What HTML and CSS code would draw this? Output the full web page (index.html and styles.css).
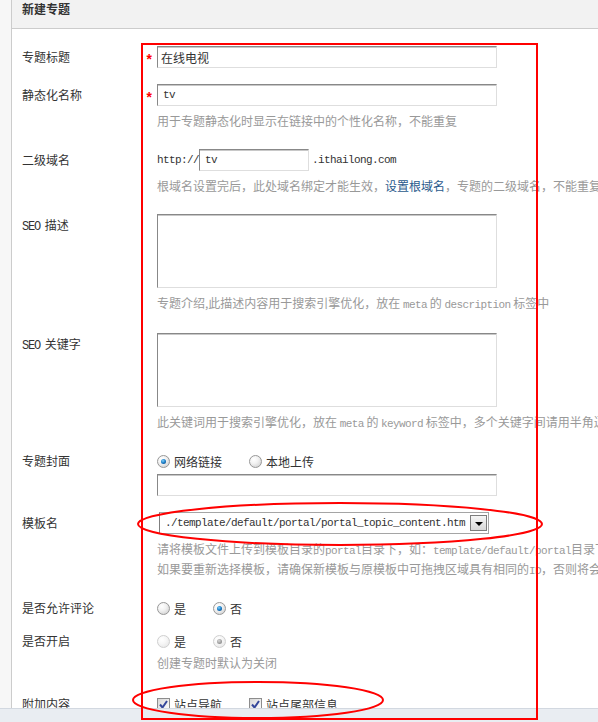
FILE: index.html
```html
<!DOCTYPE html>
<html lang="zh-CN">

<head>
    <meta charset="UTF-8">
    <meta name="viewport" content="width=device-width, initial-scale=1.0">
    <title>新建专题</title>
    <link rel="stylesheet" href="styles.css">
</head>

<body>
    <div class="page">
        <div class="side"></div>
        <div class="main">
            <h3 class="head">新建专题</h3>
            <div class="form">
                <!-- 专题标题 -->
                <div class="row">
                    <div class="label">专题标题</div>
                    <div class="req">*</div>
                    <div class="field"><input class="txt" type="text" value="在线电视"></div>
                </div>
                <!-- 静态化名称 -->
                <div class="row">
                    <div class="label">静态化名称</div>
                    <div class="req">*</div>
                    <div class="field">
                        <input class="txt en-txt" type="text" value="tv">
                        <p class="tips">用于专题静态化时显示在链接中的个性化名称，不能重复</p>
                    </div>
                </div>
                <!-- 二级域名 -->
                <div class="row">
                    <div class="label">二级域名</div>
                    <div class="req"></div>
                    <div class="field">
                        <div class="domain">
                            <span class="en">http://</span>
                            <input class="txt en-txt short" type="text" value="tv">
                            <span class="en">.ithailong.com</span>
                        </div>
                        <p class="tips">根域名设置完后，此处域名绑定才能生效，<a href="javascript:;">设置根域名</a>，专题的二级域名，不能重复</p>
                    </div>
                </div>
                <!-- SEO 描述 -->
                <div class="row">
                    <div class="label"><span class="en">SEO</span> 描述</div>
                    <div class="req"></div>
                    <div class="field">
                        <textarea class="area"></textarea>
                        <p class="tips">专题介绍,此描述内容用于搜索引擎优化，放在 <span class="en">meta</span> 的 <span class="en">description</span> 标签中</p>
                    </div>
                </div>
                <!-- SEO 关键字 -->
                <div class="row">
                    <div class="label"><span class="en">SEO</span> 关键字</div>
                    <div class="req"></div>
                    <div class="field">
                        <textarea class="area"></textarea>
                        <p class="tips">此关键词用于搜索引擎优化，放在 <span class="en">meta</span> 的 <span class="en">keyword</span> 标签中，多个关键字间请用半角逗号隔开</p>
                    </div>
                </div>
                <!-- 专题封面 -->
                <div class="row">
                    <div class="label label-s">专题封面</div>
                    <div class="req"></div>
                    <div class="field">
                        <div class="opts">
                            <span class="opt"><i class="radio on"></i>网络链接</span>
                            <span class="opt"><i class="radio"></i>本地上传</span>
                        </div>
                        <input class="txt cover" type="text" value="">
                    </div>
                </div>
                <!-- 模板名 -->
                <div class="row">
                    <div class="label">模板名</div>
                    <div class="req"></div>
                    <div class="field">
                        <div class="select">
                            <span class="en">./template/default/portal/portal_topic_content.htm</span>
                            <span class="arrow"></span>
                        </div>
                        <div class="tips">
                            <p>请将模板文件上传到模板目录的<span class="en">portal</span>目录下，如：<span class="en">template/default/portal</span>目录下</p>
                            <p>如果要重新选择模板，请确保新模板与原模板中可拖拽区域具有相同的<span class="en">ID</span>，否则将会导致数据丢失</p>
                        </div>
                    </div>
                </div>
                <!-- 是否允许评论 -->
                <div class="row row-opt">
                    <div class="label label-s">是否允许评论</div>
                    <div class="req"></div>
                    <div class="field">
                        <div class="opts">
                            <span class="opt"><i class="radio"></i>是</span>
                            <span class="opt"><i class="radio on"></i>否</span>
                        </div>
                    </div>
                </div>
                <!-- 是否开启 -->
                <div class="row row-opt">
                    <div class="label label-s">是否开启</div>
                    <div class="req"></div>
                    <div class="field">
                        <div class="opts">
                            <span class="opt"><i class="radio dis"></i>是</span>
                            <span class="opt"><i class="radio dis on"></i>否</span>
                        </div>
                        <p class="tips tips-near">创建专题时默认为关闭</p>
                    </div>
                </div>
                <!-- 附加内容 -->
                <div class="row row-opt row-last">
                    <div class="label label-s">附加内容</div>
                    <div class="req"></div>
                    <div class="field">
                        <div class="opts">
                            <span class="opt"><i class="check"><svg width="9" height="9" viewBox="0 0 9 9"><polyline points="1,4.5 3.5,7.5 8,1" fill="none" stroke="#34479a" stroke-width="2"/></svg></i>站点导航</span>
                            <span class="opt"><i class="check"><svg width="9" height="9" viewBox="0 0 9 9"><polyline points="1,4.5 3.5,7.5 8,1" fill="none" stroke="#34479a" stroke-width="2"/></svg></i>站点尾部信息</span>
                        </div>
                    </div>
                </div>
            </div>
        </div>
    </div>

    <div class="foot"></div>

    <!-- 红色标注 -->
    <svg class="mark" width="598" height="722" viewBox="0 0 598 722">
        <rect x="142" y="44" width="395" height="675" fill="none" stroke="#f00" stroke-width="2" shape-rendering="crispEdges"/>
        <ellipse cx="340" cy="524" rx="202" ry="21" fill="none" stroke="#f00" stroke-width="2"/>
        <ellipse cx="258" cy="700" rx="125" ry="18" fill="none" stroke="#f00" stroke-width="2"/>
    </svg>
</body>

</html>
```

FILE: styles.css
```css
* {
    padding: 0;
    margin: 0;
}

body {
    font: 12px "Noto Sans CJK SC", "Liberation Sans", sans-serif;
    color: #333;
    background: #fff;
}

.page {
    display: flex;
    height: 100vh;
    overflow: hidden;
}

.side {
    width: 11px;
    flex: none;
    background: #f7f7f7;
    border-right: 1px solid #ccc;
}

.main {
    flex: 1;
    min-width: 0;
    overflow: hidden;
}

.head {
    height: 28px;
    line-height: 18px;
    padding-left: 10px;
    background: #f2f2f2;
    border-bottom: 1px solid #ccc;
    font-size: 12px;
    font-weight: bold;
    color: #333;
}

.form {
    padding: 9px 0 0 10px;
}

.row {
    display: grid;
    grid-template-columns: 121px 14px minmax(0, 1fr);
    padding: 8px 0;
}

.row-opt {
    padding: 8px 0 7px;
}

.row-last {
    padding-top: 13px;
}

.label {
    line-height: 22px;
    white-space: nowrap;
}

.label-s {
    line-height: 18px;
}

.req {
    height: 0;
    overflow: visible;
    color: #f00;
    font: bold 14px/30px "Liberation Mono", monospace;
    padding-left: 2px;
}

.field {
    min-width: 0;
}

.en {
    font-family: "Liberation Mono", monospace;
    font-size: 11px;
    letter-spacing: -0.6px;
}

.label .en {
    font-size: 12px;
    letter-spacing: -1.2px;
    margin-right: 2px;
}

.txt {
    display: block;
    width: 340px;
    height: 22px;
    box-sizing: border-box;
    border: 1px solid;
    border-color: #888 #dedede #dedede #888;
    box-shadow: inset 0 1px 0 #c8c8c8;
    padding: 0 3px;
    font: 12px "Noto Sans CJK SC", sans-serif;
    color: #333;
    background: #fff;
    outline: none;
}

.en-txt {
    font: 11px "Liberation Mono", monospace;
    letter-spacing: -0.6px;
    padding-left: 5px;
}

.short {
    width: 110px;
    margin-right: 3px;
}

.domain {
    display: flex;
    align-items: center;
}

.cover {
    margin-top: 4px;
}

.area {
    display: block;
    width: 340px;
    height: 74px;
    margin-bottom: 3px;
    box-sizing: border-box;
    border: 1px solid;
    border-color: #888 #dedede #dedede #888;
    box-shadow: inset 0 1px 0 #c8c8c8;
    resize: none;
    outline: none;
    background: #fff;
}

.tips {
    color: #999;
    line-height: 18px;
    margin: 6px 0 3px;
    white-space: nowrap;
}

.tips-near {
    margin-top: 4px;
}

.tips a {
    color: #2a5a8c;
    text-decoration: none;
}

/* 单选 复选 */
.opts {
    display: flex;
    align-items: center;
    height: 18px;
}

.opt {
    display: flex;
    align-items: center;
    gap: 4px;
    margin-right: 27px;
}

.radio {
    display: flex;
    align-items: center;
    justify-content: center;
    width: 13px;
    height: 13px;
    box-sizing: border-box;
    border-radius: 50%;
    border: 1px solid #979797;
    background: radial-gradient(circle at 35% 30%, #fff 0, #f2f2f2 40%, #c9c9c9 100%);
}

.radio.on::after {
    content: "";
    width: 5px;
    height: 5px;
    border-radius: 50%;
    background: radial-gradient(circle at 40% 35%, #7fd0fa 0, #1a7cc6 50%, #0a3f78 100%);
}

.radio.dis {
    border-color: #cfcfcf;
    background: radial-gradient(circle at 35% 30%, #fff 0, #f7f7f7 40%, #e2e2e2 100%);
}

.radio.dis.on::after {
    background: radial-gradient(circle at 40% 35%, #d8d8d8 0, #9a9a9a 60%, #7a7a7a 100%);
}

.check {
    display: flex;
    align-items: center;
    justify-content: center;
    width: 13px;
    height: 13px;
    box-sizing: border-box;
    border: 1px solid #8d8d8d;
    background: linear-gradient(135deg, #d6d6d6, #fff);
}

/* 下拉框 */
.select {
    display: flex;
    align-items: center;
    justify-content: space-between;
    width: 330px;
    height: 22px;
    box-sizing: border-box;
    margin-left: 2px;
    border: 1px solid #a5a5a5;
    border-left-color: #7f7f7f;
    padding: 0 1px 0 5px;
    background: #fff;
}

.arrow {
    display: flex;
    align-items: center;
    justify-content: center;
    width: 17px;
    height: 16px;
    box-sizing: border-box;
    border: 1px solid #7d7d7d;
    background: linear-gradient(#f6f6f6, #d8d8d8);
}

.arrow::after {
    content: "";
    border-left: 4px solid transparent;
    border-right: 4px solid transparent;
    border-top: 4px solid #000;
    margin-top: 2px;
}

.foot {
    position: fixed;
    left: 0;
    right: 0;
    bottom: 0;
    height: 13px;
    border-top: 1px solid #d2d8e0;
    background: #e9edf2;
    z-index: 1;
}

.mark {
    position: absolute;
    left: 0;
    top: 0;
    z-index: 2;
    pointer-events: none;
}
```
